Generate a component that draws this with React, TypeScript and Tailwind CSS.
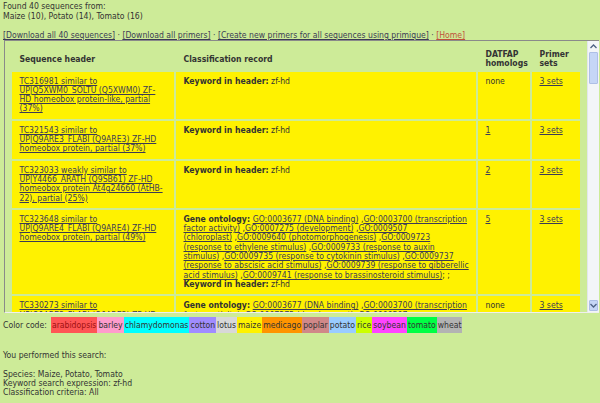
import React from "react";

// one row of the result table
type Row = {
  header: string[];
  record: React.ReactNode;
  homologs: string;
  homologsLink: boolean;
};

const link = "underline text-[#3b3b55]";

// gene ontology terms, already split where the page wraps them
const goLines: string[][] = [
  ["GO:0003677 (DNA binding)", "GO:0003700 (transcription"],
  ["factor activity)", "GO:0007275 (development)", "GO:0009507"],
  ["(chloroplast)", "GO:0009640 (photomorphogenesis)", "GO:0009723"],
  ["(response to ethylene stimulus)", "GO:0009733 (response to auxin"],
  ["stimulus)", "GO:0009735 (response to cytokinin stimulus)", "GO:0009737"],
  ["(response to abscisic acid stimulus)", "GO:0009739 (response to gibberellic"],
  ["acid stimulus)", "GO:0009741 (response to brassinosteroid stimulus)"],
];

const Keyword = () => (
  <span>
    <b>Keyword in header:</b> zf-hd
  </span>
);

const GeneOntology = ({ keyword }: { keyword: boolean }) => (
  <div>
    {goLines.map((line, li) => (
      <div key={li} className="whitespace-nowrap">
        {li === 0 && <b>Gene ontology: </b>}
        {line.map((t, i) => (
          <React.Fragment key={t}>
            {i > 0 && " ,"}
            <a className={link}>{t}</a>
          </React.Fragment>
        ))}
        {li === goLines.length - 1 ? "; ;" : ""}
      </div>
    ))}
    {keyword && <Keyword />}
  </div>
);

const rows: Row[] = [
  {
    header: ["TC316981 similar to", "UP|Q5XWM0_SOLTU (Q5XWM0) ZF-", "HD homeobox protein-like, partial", "(37%)"],
    record: <Keyword />,
    homologs: "none",
    homologsLink: false,
  },
  {
    header: ["TC321543 similar to", "UP|Q9ARE3_FLABI (Q9ARE3) ZF-HD", "homeobox protein, partial (37%)"],
    record: <Keyword />,
    homologs: "1",
    homologsLink: true,
  },
  {
    header: ["TC323033 weakly similar to", "UP|Y4466_ARATH (Q9SB61) ZF-HD", "homeobox protein At4g24660 (AtHB-", "22), partial (25%)"],
    record: <Keyword />,
    homologs: "2",
    homologsLink: true,
  },
  {
    header: ["TC323648 similar to", "UP|Q9ARE4_FLABI (Q9ARE4) ZF-HD", "homeobox protein, partial (49%)"],
    record: <GeneOntology keyword />,
    homologs: "5",
    homologsLink: true,
  },
  {
    header: ["TC330273 similar to", "UP|Q9ARE3_FLABI (Q9ARE3) ZF-HD", "homeobox protein, partial (41%)"],
    record: <GeneOntology keyword={false} />,
    homologs: "none",
    homologsLink: false,
  },
];

const colorCodes = [
  { name: "arabidopsis", cls: "bg-[#ff5555] text-[#a01010]" },
  { name: "barley", cls: "bg-[#ff9ccc]" },
  { name: "chlamydomonas", cls: "bg-[#00ffff]" },
  { name: "cotton", cls: "bg-[#a08cff]" },
  { name: "lotus", cls: "bg-[#d8d8d8]" },
  { name: "maize", cls: "bg-[#fff200]" },
  { name: "medicago", cls: "bg-[#ff9400]" },
  { name: "poplar", cls: "bg-[#d08888]" },
  { name: "potato", cls: "bg-[#99ccff]" },
  { name: "rice", cls: "bg-[#ccff00]" },
  { name: "soybean", cls: "bg-[#ff44ff]" },
  { name: "tomato", cls: "bg-[#00ff44]" },
  { name: "wheat", cls: "bg-[#b3b3b3]" },
];

const Chevron = ({ up }: { up: boolean }) => (
  <svg width="7" height="5" viewBox="0 0 7 5">
    <path
      d={up ? "M0.5 4 L3.5 1 L6.5 4" : "M0.5 1 L3.5 4 L6.5 1"}
      fill="none"
      stroke="#4d6185"
      strokeWidth="1.3"
    />
  </svg>
);

const App = () => {
  return (
    <div
      className="w-[600px] h-[403px] overflow-hidden bg-[#cdeb98] text-[#333333] text-[8.6px] leading-[10px] px-[3px] pt-[1px]"
      style={{ fontFamily: '"DejaVu Sans Condensed", "Liberation Sans", sans-serif' }}
    >
      <p>Found 40 sequences from:</p>
      <p>Maize (10), Potato (14), Tomato (16)</p>
      <p className="mt-[9px] text-[#3b3b55] whitespace-pre">
        <a className="underline">[Download all 40 sequences]</a> · <a className="underline">[Download all primers]</a> ·{" "}
        <a className="underline">[Create new primers for all sequences using primique]</a> ·{" "}
        <a className="underline text-[#c0503a]">[Home]</a>
      </p>

      {/* scrolling result box */}
      <div className="ml-[1px] w-[595px] h-[273px] flex border-t border-l border-[#8a8a8a] border-b border-b-[#f0f0f0]">
        <div className="flex-1 overflow-hidden pl-[5px]">
          <table className="table-fixed w-[572px] border-separate border-spacing-[2px] text-left leading-[9.3px]">
            <colgroup>
              <col className="w-[162px]" />
              <col className="w-[300px]" />
              <col className="w-[52px]" />
              <col className="w-[48px]" />
            </colgroup>
            <thead>
              <tr className="align-middle">
                <th className="px-[7.5px] pt-[7px] pb-[1px] font-bold">Sequence header</th>
                <th className="px-[7.5px] pt-[7px] pb-[1px] font-bold">Classification record</th>
                <th className="px-[7.5px] pt-[7px] pb-[1px] font-bold">DATFAP homologs</th>
                <th className="px-[7.5px] pt-[7px] pb-[1px] font-bold">Primer sets</th>
              </tr>
            </thead>
            <tbody>
              {rows.map((r) => (
                <tr key={r.header[0]} className="align-top bg-[#fff200]">
                  <td className="px-[7.5px] pt-[5px] pb-[5px]">
                    <a className={link}>
                      {r.header.map((l, i) => (
                        <React.Fragment key={l}>
                          {i > 0 && <br />}
                          {l}
                        </React.Fragment>
                      ))}
                    </a>
                  </td>
                  <td className="px-[7.5px] pt-[5px] pb-[5px]">{r.record}</td>
                  <td className="px-[7.5px] pt-[5px] pb-[5px]">
                    {r.homologsLink ? <a className={link}>{r.homologs}</a> : r.homologs}
                  </td>
                  <td className="px-[7.5px] pt-[5px] pb-[5px] whitespace-nowrap">
                    <a className={link}>3 sets</a>
                  </td>
                </tr>
              ))}
            </tbody>
          </table>
        </div>

        {/* scrollbar */}
        <div className="w-[12px] flex flex-col bg-[#f3f5f8] border-l border-[#e2e6ec]">
          <div className="h-[11px] flex items-center justify-center">
            <Chevron up />
          </div>
          <div className="h-[32px] mx-[1px] bg-[#c6d6f6] border border-[#aebfe6] rounded-[1px]" />
          <div className="flex-1" />
          <div className="h-[11px] mx-[1px] mb-[1px] flex items-center justify-center bg-[#c6d6f6] border border-[#aebfe6] rounded-[1px]">
            <Chevron up={false} />
          </div>
        </div>
      </div>

      <div className="mt-[4px] flex items-center">
        <span className="mr-[4px]">Color code:</span>
        {colorCodes.map((c) => (
          <span key={c.name} className={`${c.cls} h-[16px] flex items-center px-[1px]`}>
            {c.name}
          </span>
        ))}
      </div>

      <p className="mt-[18px] leading-[9.3px]">You performed this search:</p>
      <p className="mt-[10px] leading-[9px]">Species: Maize, Potato, Tomato</p>
      <p className="leading-[9px]">Keyword search expression: zf-hd</p>
      <p className="leading-[9px]">Classification criteria: All</p>
    </div>
  );
};

export default App;
